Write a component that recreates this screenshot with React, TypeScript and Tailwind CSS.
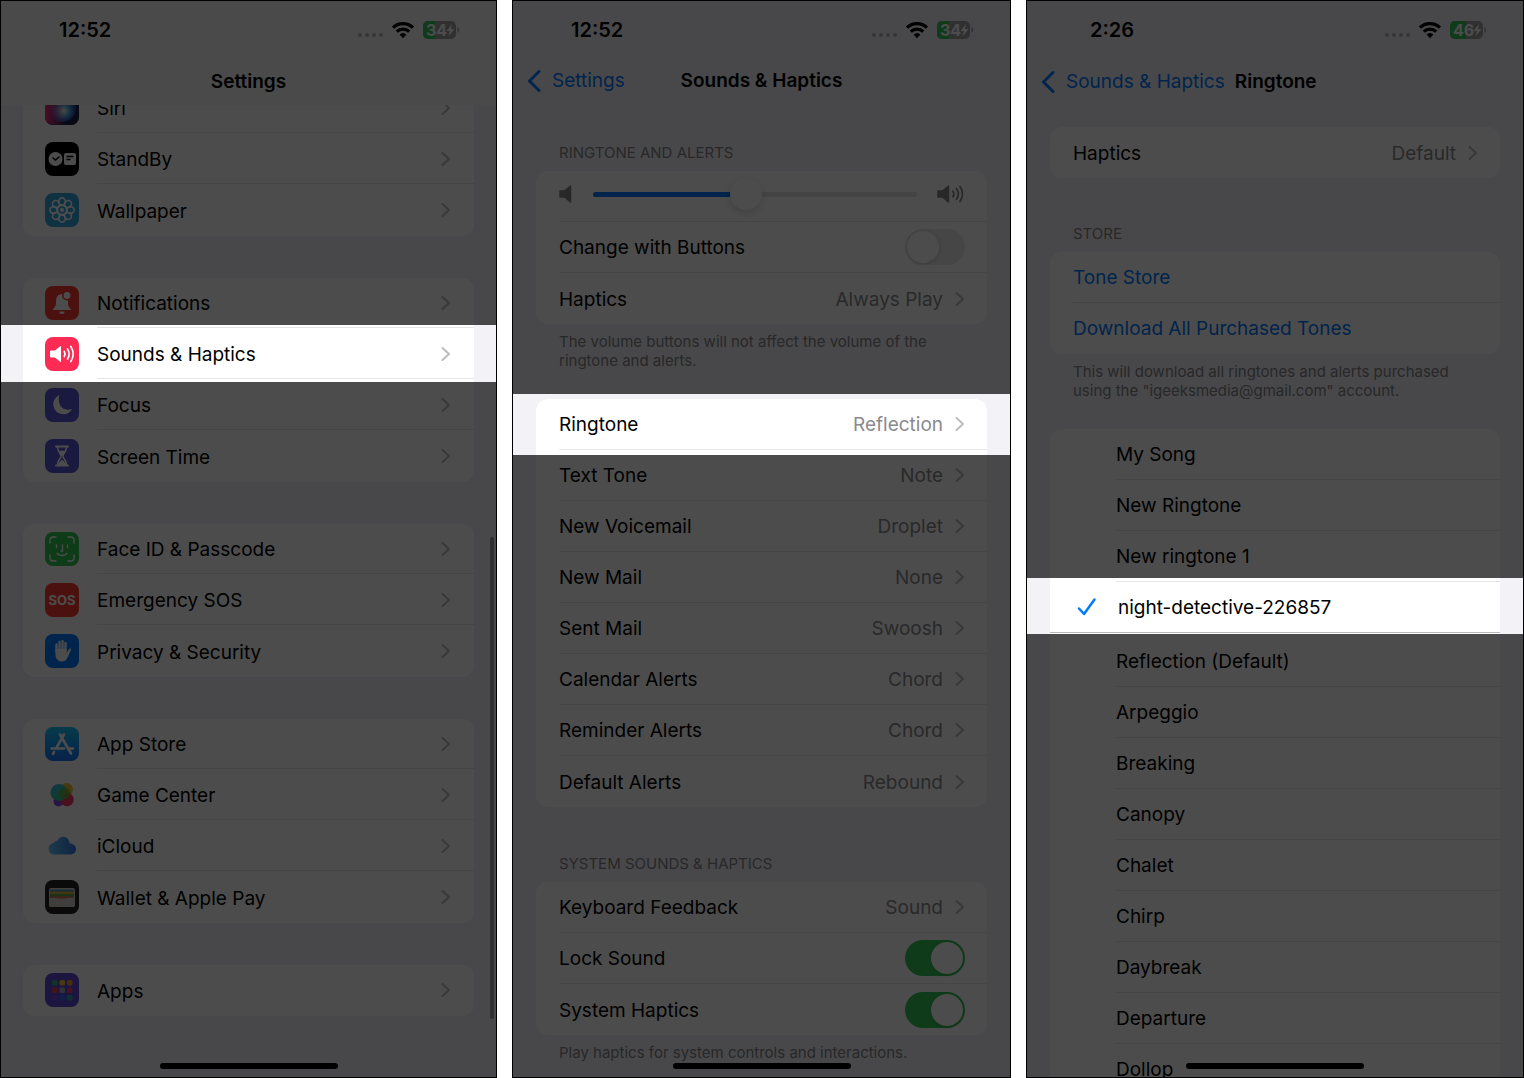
import { useState, type ReactNode } from 'react'

// Dims everything in the phone except the row it is placed in
function Spotlight({ className }: { className: string }) {
  return (
    <span
      aria-hidden="true"
      className={`absolute z-30 pointer-events-none shadow-[0_0_0_1200px_rgba(0,0,0,0.7)] ${className}`}
    />
  )
}

function Chevron() {
  return (
    <svg width="10" height="16" viewBox="0 0 10 16" fill="none" stroke="#bcbcc0" strokeWidth="2" strokeLinecap="round" strokeLinejoin="round" className="shrink-0">
      <path d="M1.500 2 8 8l-6.500 6" />
    </svg>
  )
}

function Speaker({ waves = false }: { waves?: boolean }) {
  return (
    <svg width={waves ? 28 : 14} height="20" viewBox={waves ? '0 0 28 20' : '0 0 14 20'} fill="none" stroke="#85858a" strokeWidth="1.800" strokeLinecap="round" className="shrink-0">
      <path d="M1 7h4.500l6-5v16l-6-5H1z" fill="#85858a" stroke="#85858a" strokeWidth="1.500" strokeLinejoin="round" />
      {waves && (
        <>
          <path d="M16 7.200a5 5 0 0 1 0 5.600" />
          <path d="M19.500 4.800a9 9 0 0 1 0 10.400" />
          <path d="M23 2.500a13 13 0 0 1 0 15" />
        </>
      )}
    </svg>
  )
}

type StatusProps = { time: string; level: string; fill: number; className?: string }

function StatusBar({ time, level, fill, className = 'pl-[58px]' }: StatusProps) {
  return (
    <div className={`flex h-[56px] items-center justify-between pt-[2px] pr-9 ${className}`}>
      <span className="text-[20px] leading-6 font-semibold text-black">{time}</span>
      <div className="flex items-center">
        <span className="mt-[10px] mr-2 flex gap-[3px]">
          {[0, 1, 2, 3].map((i) => (
            <span key={i} className="h-1 w-1 rounded-full bg-[#b4b4b8]" />
          ))}
        </span>
        <svg width="24" height="18" viewBox="0 0 24 18" fill="none" stroke="#000" strokeWidth="3.200">
          <path d="M2 6.600a14.500 14.500 0 0 1 20 0" />
          <path d="M5.800 10.600a9 9 0 0 1 12.400 0" />
          <path d="M12 17.200l-3.400-3.600a5 5 0 0 1 6.800 0z" fill="#000" stroke="none" />
        </svg>
        <svg width="37" height="18" viewBox="0 0 37 18" className="ml-2">
          <rect width="33" height="18" rx="5" fill="#a2a2a6" />
          <path d={`M5 0H${fill}V18H5a5 5 0 0 1-5-5V5a5 5 0 0 1 5-5z`} fill="#34c759" />
          <path d="M34.500 6a3.500 3.500 0 0 1 0 6z" fill="#a2a2a6" />
          <text x="3" y="14.500" fill="#fff" fontSize="16" fontWeight="700">{level}</text>
          <path d="M29 3 23.500 10h3.500l-1.500 5.500 6-7.500h-3.500z" fill="#fff" />
        </svg>
      </div>
    </div>
  )
}

function Phone({ label, className, children }: { label: string; className: string; children: ReactNode }) {
  return (
    <section aria-label={label} className={`relative isolate flex h-screen min-w-0 flex-col overflow-hidden border border-black bg-[#f2f2f7] ${className}`}>
      {children}
      <span className="absolute bottom-2 left-1/2 z-40 h-[6px] w-[178px] -translate-x-1/2 rounded-full bg-black" />
    </section>
  )
}

function Back({ children }: { children: ReactNode }) {
  return (
    <a href="#" className="flex items-center gap-[11px] text-[19px] leading-6 text-[#007aff]">
      <svg width="14" height="24" viewBox="0 0 14 24" fill="none" stroke="currentColor" strokeWidth="3" strokeLinecap="round" strokeLinejoin="round">
        <path d="M12 2.500 2.500 12l9.500 9.500" />
      </svg>
      {children}
    </a>
  )
}

const tileColors = {
  siri: 'bg-[#20345e]',
  black: 'bg-black',
  cyan: 'bg-[#35a8de]',
  red: 'bg-[#fc3b30]',
  pink: 'bg-[#fe2c55]',
  indigo: 'bg-[#5856d6]',
  green: 'bg-[#30c552]',
  blue: 'bg-[#007aff]',
  store: 'bg-linear-to-b from-[#1ac4fb] to-[#1d70f2]',
  none: '',
  wallet: 'bg-[#242426]',
  apps: 'bg-[#5f48d8]',
}

type Item = { name: string; tile: keyof typeof tileColors; art: ReactNode }

const siri = (
  <>
    <defs>
      <radialGradient id="orb" cx="55%" cy="60%" r="55%">
        <stop offset="0" stopColor="#fff" />
        <stop offset=".3" stopColor="#6cc5e8" />
        <stop offset=".65" stopColor="#275bb5" />
        <stop offset="1" stopColor="#151a3a" />
      </radialGradient>
      <linearGradient id="siriPink" x1="0" x2="1">
        <stop offset="0" stopColor="#f0347c" />
        <stop offset=".6" stopColor="#f0347c" stopOpacity="0" />
      </linearGradient>
    </defs>
    <rect width="34" height="34" rx="8" fill="#1a2148" />
    <circle cx="17" cy="17" r="14" fill="url(#orb)" />
    <rect width="34" height="34" rx="8" fill="url(#siriPink)" />
  </>
)

const standby = (
  <>
    <circle cx="10.500" cy="17" r="7" fill="#fff" />
    <path d="M7.500 15.500 10.500 18l4-3.500" stroke="#000" strokeWidth="1.400" fill="none" />
    <rect x="19" y="11" width="12" height="12" rx="2" fill="#fff" />
    <path d="M21.500 14.500h7M21.500 17.500h4" stroke="#000" strokeWidth="1.400" />
  </>
)

const wallpaper = (
  <g fill="none" stroke="#fff" strokeWidth="1.600">
    {[0, 45, 90, 135, 180, 225, 270, 315].map((a) => (
      <ellipse key={a} cx="17" cy="8.500" rx="3.300" ry="3.600" transform={`rotate(${a} 17 17)`} />
    ))}
    <circle cx="17" cy="17" r="4.600" />
    <circle cx="17" cy="17" r="1.200" fill="#fff" />
  </g>
)

const bell = (
  <>
    <path d="M8 24c0-2 3-3 3-7 0-5 1-9 6-9 6 0 6 4 6 9s3 5 3 7z" fill="#fff" />
    <path d="M14.500 25.500h5a2.500 2.500 0 0 1-5 0z" fill="#fff" />
    <circle cx="22" cy="9.500" r="4.200" fill="#fff" stroke="#fc3b30" strokeWidth="1.600" />
  </>
)

const sounds = (
  <>
    <path d="M5.500 14H10l5.500-4.500v15L10 20H5.500z" fill="#fff" stroke="#fff" strokeLinejoin="round" />
    <g fill="none" stroke="#fff" strokeWidth="1.700" strokeLinecap="round">
      <path d="M19.300 14.500a5 5 0 0 1 0 5" />
      <path d="M22.500 12a9 9 0 0 1 0 10" />
      <path d="M25.800 9.500a14 14 0 0 1 0 15" />
    </g>
  </>
)

const moon = <path d="M14.500 7C8 10 6.500 17 10.500 22.500 15 28 24 27.500 27 21c-5 1.500-10 .5-12-4-1.500-3.500-1.500-7-.5-10z" fill="#fff" />

const hourglass = (
  <g fill="none" stroke="#fff" strokeWidth="1.600" strokeLinecap="round" strokeLinejoin="round">
    <path d="M11 7.500h12M11 26.500h12" strokeWidth="2" />
    <path d="M12.500 8c0 5 3.500 6 3.500 9s-3.500 4-3.500 9M21.500 8c0 5-3.500 6-3.500 9s3.500 4 3.500 9" />
    <path d="M14.500 12.500h5L17 16zM13.500 25.500l3.500-4 3.500 4z" fill="#fff" />
  </g>
)

const face = (
  <g fill="none" stroke="#fff" strokeWidth="1.400" strokeLinecap="round">
    <path d="M5 11V8a3 3 0 0 1 3-3h3M23 5h3a3 3 0 0 1 3 3v3M29 23v3a3 3 0 0 1-3 3h-3M11 29H8a3 3 0 0 1-3-3v-3" />
    <path d="M11.500 13v2.500M22.500 13v2.500M17.500 13v6h-1.500M12 21.500c3 2.500 7 2.500 10 0" />
  </g>
)

const sos = <text x="17" y="22" textAnchor="middle" fontSize="13" fontWeight="700" fill="#fff">SOS</text>

const hand = (
  <>
    <path d="M10.500 17v4c0 4 3 6.500 6.500 6.500 3 0 4.500-1.500 6-5l3-6.500c.5-1.500-1.200-2-2-.8L21.500 19v-4h-11z" fill="#fff" />
    <path d="M11.500 18V10.500M14.500 17V8M17.500 17V7M20.500 17.500V9" stroke="#fff" strokeWidth="2.300" strokeLinecap="round" />
  </>
)

const appStore = (
  <g fill="none" stroke="#fff" strokeWidth="2.600" strokeLinecap="round">
    <path d="M19 7.500 11 21.500M15 7.500l11 19M6.500 21.500H19M24 21.500h4M9 25l-1 1.800" />
  </g>
)

const gameCenter = (
  <>
    <defs>
      <linearGradient id="game" x1="0" y1="0" x2="1" y2="1">
        <stop offset="0" stopColor="#2cc7f2" />
        <stop offset="1" stopColor="#43bd6a" />
      </linearGradient>
    </defs>
    <circle cx="21.500" cy="11.500" r="6.500" fill="#e3c42e" />
    <circle cx="13.500" cy="23.500" r="5" fill="#8a45e8" />
    <circle cx="22" cy="21.500" r="6.800" fill="#f53667" />
    <circle cx="14" cy="14.500" r="8.500" fill="url(#game)" />
    <circle cx="20" cy="15.500" r="5.500" fill="#78a234" fillOpacity=".75" />
  </>
)

const cloud = (
  <>
    <defs>
      <linearGradient id="cloud" x1="0" x2="1">
        <stop offset="0" stopColor="#62c4f5" />
        <stop offset="1" stopColor="#3177ea" />
      </linearGradient>
    </defs>
    <path d="M9 25.500a5.800 5.800 0 0 1-.5-11.500 4.500 4.500 0 0 1 4-2.500C14 8.500 17 7 20 8c3 1 4.500 3.500 4.500 6.500 4 0 6.500 2.500 6.500 5.500s-2.500 5.500-5.500 5.500z" fill="url(#cloud)" />
  </>
)

const wallet = (
  <>
    <rect x="4" y="8" width="26" height="19" rx="2" fill="#d3d0c8" />
    <path d="M5 9.500h24v3H5z" fill="#4c9fc0" />
    <path d="M5 11.500h24v3H5z" fill="#e0b23a" />
    <path d="M5 14h24v3H5z" fill="#5aab4c" />
    <path d="M5 16.500h24v2H5z" fill="#e5695c" />
    <path d="M4 18h7c2 0 2.500 2.500 6 2.500s4-2.500 6-2.500h7v7a2 2 0 0 1-2 2H6a2 2 0 0 1-2-2z" fill="#d3d0c8" />
  </>
)

const dots = ['#36b37e', '#f5c12e', '#f0962e', '#ef4343', '#a8a5b5', '#ea3e6c', '#7348dc', '#2f6ff0', '#35a3b5']
const apps = dots.map((c, i) => (
  <rect key={c} x={7 + (i % 3) * 7.5} y={7 + Math.floor(i / 3) * 7.5} width="5.500" height="5.500" rx="1.500" fill={c} />
))

const groups: Item[][] = [
  [
    { name: 'Siri', tile: 'siri', art: siri },
    { name: 'StandBy', tile: 'black', art: standby },
    { name: 'Wallpaper', tile: 'cyan', art: wallpaper },
  ],
  [
    { name: 'Notifications', tile: 'red', art: bell },
    { name: 'Sounds & Haptics', tile: 'pink', art: sounds },
    { name: 'Focus', tile: 'indigo', art: moon },
    { name: 'Screen Time', tile: 'indigo', art: hourglass },
  ],
  [
    { name: 'Face ID & Passcode', tile: 'green', art: face },
    { name: 'Emergency SOS', tile: 'red', art: sos },
    { name: 'Privacy & Security', tile: 'blue', art: hand },
  ],
  [
    { name: 'App Store', tile: 'store', art: appStore },
    { name: 'Game Center', tile: 'none', art: gameCenter },
    { name: 'iCloud', tile: 'none', art: cloud },
    { name: 'Wallet & Apple Pay', tile: 'wallet', art: wallet },
  ],
  [{ name: 'Apps', tile: 'apps', art: apps }],
]

function SettingsScreen() {
  return (
    <Phone label="Settings" className="flex-[497]">
      <header className="relative z-10 h-[104px] shrink-0 bg-[#f9f9fa]">
        <StatusBar time="12:52" level="34" fill={12} />
        <h1 className="pt-[13px] text-center text-[19px] leading-6 font-semibold text-black">Settings</h1>
      </header>
      <div className="-mt-[22px] flex flex-col gap-[42px] px-[22px]">
        {groups.map((items, g) => (
          <ul key={g} className="rounded-xl bg-white">
            {items.map(({ name, tile, art }, i) => (
              <li key={name} className="relative">
                <a href="#" className="flex h-[51px] items-center pb-px pl-[22px] text-[19px] leading-6 text-black">
                  <span className={`mr-[18px] h-[34px] w-[34px] overflow-hidden rounded-lg ${tileColors[tile]}`}>
                    <svg width="34" height="34" viewBox="0 0 34 34">{art}</svg>
                  </span>
                  <span className={`flex h-full flex-1 items-center justify-between pr-[23px] ${i < items.length - 1 ? 'border-b border-[#e6e6e9]' : ''}`}>
                    <span className="pt-[3px]">{name}</span>
                    <Chevron />
                  </span>
                </a>
                {name === 'Sounds & Haptics' && <Spotlight className="-inset-x-[22px] -top-[4px] -bottom-[2px]" />}
              </li>
            ))}
          </ul>
        ))}
      </div>
      <span className="absolute right-[2px] bottom-[58px] h-[482px] w-[4px] rounded-full bg-[#9c9ca0]" />
    </Phone>
  )
}

function Toggle({ label, on }: { label: string; on: boolean }) {
  const [checked, setChecked] = useState(on)
  return (
    <label className="flex h-full flex-1 items-center justify-between">
      <span className="pt-[2px]">{label}</span>
      <input type="checkbox" role="switch" checked={checked} onChange={(e) => setChecked(e.target.checked)} className="sr-only" />
      <span className={`flex h-[36px] w-[60px] items-center rounded-full p-[2px] ${checked ? 'justify-end bg-[#34c759]' : 'bg-[#e9e9eb]'}`}>
        <span className="h-8 w-8 rounded-full bg-white shadow-[0_1px_4px_rgba(0,0,0,0.15)]" />
      </span>
    </label>
  )
}

function Value({ label, value }: { label: string; value: string }) {
  return (
    <a href="#" className="flex h-full flex-1 items-center">
      <span className="pt-[2px]">{label}</span>
      <span className="mr-3 ml-auto pt-[2px] text-[#8a8a8e]">{value}</span>
      <Chevron />
    </a>
  )
}

function Row({ last = false, children }: { last?: boolean; children: ReactNode }) {
  return (
    <li className="relative pl-[23px] text-[19px] leading-6 text-black">
      <div className={`flex h-[51px] items-center pr-[22px] ${last ? '' : 'border-b border-[#e6e6e9]'}`}>{children}</div>
    </li>
  )
}

const tones = [
  ['Ringtone', 'Reflection'],
  ['Text Tone', 'Note'],
  ['New Voicemail', 'Droplet'],
  ['New Mail', 'None'],
  ['Sent Mail', 'Swoosh'],
  ['Calendar Alerts', 'Chord'],
  ['Reminder Alerts', 'Chord'],
  ['Default Alerts', 'Rebound'],
]

function SoundsScreen() {
  const [volume, setVolume] = useState(47)
  return (
    <Phone label="Sounds & Haptics" className="flex-[499]">
      <header className="h-[104px] shrink-0">
        <StatusBar time="12:52" level="34" fill={12} />
        <div className="grid grid-cols-[1fr_auto_1fr] items-center px-[14px] pt-3">
          <Back>Settings</Back>
          <h1 className="text-[19px] leading-6 font-semibold text-black">Sounds &amp; Haptics</h1>
        </div>
      </header>
      <div className="px-[23px]">
        <h2 className="mt-[38px] px-[23px] text-[15px] leading-5 text-[#85858a]">RINGTONE AND ALERTS</h2>
        <ul className="mt-2 rounded-xl bg-white">
          <Row>
            <label className="flex flex-1 items-center gap-5 pb-1">
              <Speaker />
              <input
                type="range"
                aria-label="Ringtone volume"
                value={volume}
                onChange={(e) => setVolume(Number(e.target.value))}
                style={{ backgroundImage: `linear-gradient(90deg, #007aff ${volume}%, #e3e3e6 ${volume}%)` }}
                className="h-[5px] min-w-0 flex-1 appearance-none rounded-full [&::-webkit-slider-thumb]:h-8 [&::-webkit-slider-thumb]:w-8 [&::-webkit-slider-thumb]:appearance-none [&::-webkit-slider-thumb]:rounded-full [&::-webkit-slider-thumb]:bg-white [&::-webkit-slider-thumb]:shadow-[0_3px_8px_rgba(0,0,0,0.15)]"
              />
              <Speaker waves />
            </label>
          </Row>
          <Row><Toggle label="Change with Buttons" on={false} /></Row>
          <Row last><Value label="Haptics" value="Always Play" /></Row>
        </ul>
        <p className="mt-2 px-[23px] text-[15px] leading-[19px] text-[#85858a]">
          The volume buttons will not affect the volume of the ringtone and alerts.
        </p>
        <div className="relative mt-[29px]">
          <ul className="rounded-xl bg-white">
            {tones.map(([label, value], i) => (
              <Row key={label} last={i === tones.length - 1}><Value label={label} value={value} /></Row>
            ))}
          </ul>
          <Spotlight className="-inset-x-[23px] -top-[5px] h-[61px]" />
        </div>
        <h2 className="mt-[47px] px-[23px] text-[15px] leading-5 text-[#85858a]">SYSTEM SOUNDS &amp; HAPTICS</h2>
        <ul className="mt-2 rounded-xl bg-white">
          <Row><Value label="Keyboard Feedback" value="Sound" /></Row>
          <Row><Toggle label="Lock Sound" on /></Row>
          <Row last><Toggle label="System Haptics" on /></Row>
        </ul>
        <p className="mt-2 px-[23px] text-[15px] leading-[19px] text-[#85858a]">
          Play haptics for system controls and interactions.
        </p>
      </div>
    </Phone>
  )
}

const current = 'night-detective-226857'

const ringtones = [
  'My Song',
  'New Ringtone',
  'New ringtone 1',
  current,
  'Reflection (Default)',
  'Arpeggio',
  'Breaking',
  'Canopy',
  'Chalet',
  'Chirp',
  'Daybreak',
  'Departure',
  'Dollop',
]

function RingtoneScreen() {
  const [selected, setSelected] = useState(current)
  return (
    <Phone label="Ringtone" className="flex-[498]">
      <header className="h-[104px] shrink-0">
        <StatusBar time="2:26" level="46" fill={16} className="pl-[63px]" />
        <div className="flex items-center gap-[10px] pt-[13px] pl-[14px]">
          <Back>Sounds &amp; Haptics</Back>
          <h1 className="text-[19px] leading-6 font-semibold text-black">Ringtone</h1>
        </div>
      </header>
      <div className="px-[23px]">
        <ul className="mt-[22px] rounded-xl bg-white">
          <Row last><Value label="Haptics" value="Default" /></Row>
        </ul>
        <h2 className="mt-[46px] px-[23px] text-[15px] leading-5 text-[#85858a]">STORE</h2>
        <ul className="mt-2 rounded-xl bg-white">
          <Row><a href="#" className="pt-[2px] text-[#007aff]">Tone Store</a></Row>
          <Row last><a href="#" className="text-[#007aff]">Download All Purchased Tones</a></Row>
        </ul>
        <p className="mt-2 px-[23px] text-[15px] leading-[19px] text-[#85858a]">
          This will download all ringtones and alerts purchased using the "igeeksmedia@gmail.com" account.
        </p>
        <ul className="mt-[29px] rounded-xl bg-white">
          {ringtones.map((name) => (
            <li key={name} className={`relative text-[19px] leading-6 text-black ${name === current ? 'pb-[3px]' : 'pl-[66px]'}`}>
              <label className={`flex h-[51px] items-center border-b ${name === current ? 'border-[#b8b8b8] pl-[68px]' : 'border-[#e6e6e9]'}`}>
                <input type="radio" name="ringtone" checked={selected === name} onChange={() => setSelected(name)} className="sr-only" />
                {selected === name && (
                  <svg width="20" height="20" viewBox="0 0 20 20" fill="none" stroke="#007aff" strokeWidth="2.500" strokeLinecap="round" strokeLinejoin="round" className="absolute left-[27px]">
                    <path d="m2 11.500 5 5.500L17.500 2.500" />
                  </svg>
                )}
                <span className="pt-[2px]">{name}</span>
              </label>
              {name === current && <Spotlight className="-inset-x-[23px] -top-[4px] bottom-[2px]" />}
            </li>
          ))}
        </ul>
      </div>
    </Phone>
  )
}

export default function App() {
  return (
    <main className="flex h-screen gap-[15px] overflow-hidden bg-white font-['Inter','Liberation_Sans',sans-serif]">
      <SettingsScreen />
      <SoundsScreen />
      <RingtoneScreen />
    </main>
  )
}
